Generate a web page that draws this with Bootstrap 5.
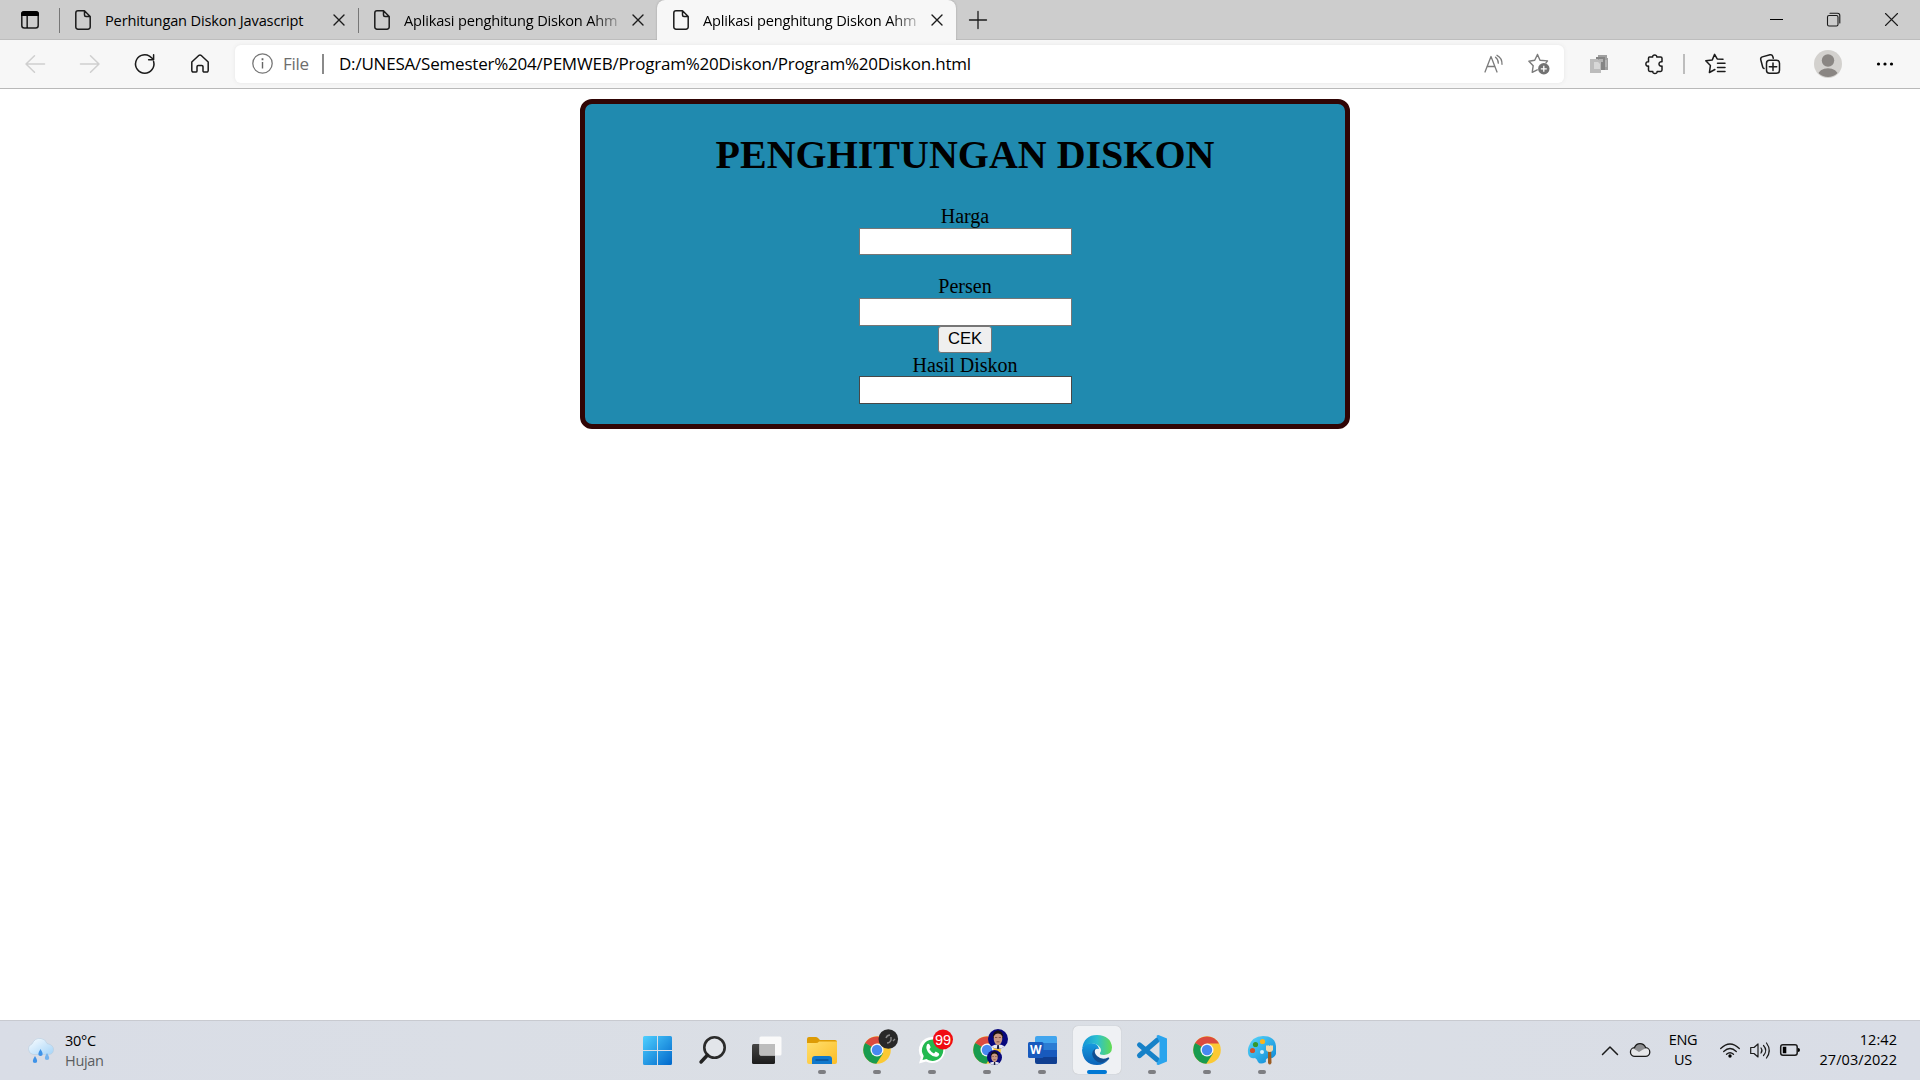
<!DOCTYPE html>
<html lang="id">
<head>
<meta charset="utf-8">
<title>Aplikasi penghitung Diskon</title>
<link href="https://cdn.jsdelivr.net/npm/bootstrap@5.3.0/dist/css/bootstrap.min.css" rel="stylesheet">
<style>
  body{width:1920px;height:1080px;overflow:hidden;background:#fff;color:#000;font-family:"Open Sans","Noto Sans",sans-serif}
  svg{display:block;flex:none;overflow:visible}
  .ln{fill:none;stroke:#1b1b1b;stroke-width:1.5;stroke-linecap:round;stroke-linejoin:round}
  .tabstrip{height:40px;background:#cdcdcd;box-shadow:inset 0 -1px 0 #bdbdbd}
  .tab-tools{width:59px;padding-left:21px}
  .tabitem{width:299px;height:40px;padding-left:16px;position:relative}
  .tabitem.sep::before{content:"";position:absolute;left:0;top:8px;width:1px;height:25px;background:#777}
  .tabitem.live{background:#f7f7f7;border-radius:8px 8px 0 0;box-shadow:0 0 2px #999;clip-path:inset(0 -3px 0 -3px)}
  .tabname{width:228px;margin-left:14px;padding-bottom:1px;font-size:14.6px;line-height:20px;letter-spacing:-.16px;white-space:nowrap}
  .tabname.fade-end{letter-spacing:-.2px;-webkit-mask-image:linear-gradient(90deg,#000 188px,transparent 222px);mask-image:linear-gradient(90deg,#000 188px,transparent 222px)}
  .winctl{width:57.5px}
  .toolbar{height:49px;background:#f7f7f7;border-bottom:1px solid #b9b9b9;padding:0 8px 1px 7.5px}
  .slot{width:55px;height:40px;display:flex;align-items:center;justify-content:center;flex:none}
  .addr{width:1329px;height:38px;margin:0 7.5px;background:#fff;border-radius:6px;box-shadow:0 0 4px #e6e6e6;padding-left:17px;font-size:17px}
  .vbar{width:2px;height:20px;background:#8a8a8a;flex:none}
  .filetag{color:#6d6d6d;width:39px;margin-left:10px;letter-spacing:-.3px}
  .urltext{margin-left:15px;letter-spacing:-.21px;white-space:nowrap}
  .viewport{height:931px;padding-top:10px;padding-left:580px;font-family:"Liberation Serif",serif}
  .calc{width:770px;height:330px;background:#208aaf;border:5px solid #300505;border-radius:12px;font-size:20px}
  .calc h1{font-size:40px;font-weight:700;line-height:46px;margin:28px 0 26px;color:#000;width:100%;text-align:center}
  .calc label{line-height:25px;height:24px}
  .calc input{width:213px;height:27px;border:1px solid #767676;border-radius:0;background:#fff;padding:1px 3px;display:block}
  .calc input.tall{height:28px}
  .calc input.result{border-color:#484848}
  .calc button{width:54px;height:27px;border:1px solid #767676;border-radius:3px;background:#efefef;font:16.67px/22px "Liberation Sans",sans-serif;padding:0 0 1px;color:#000}
  .taskbar{height:60px;background:linear-gradient(90deg,#d9dde6,#dbdfe5 50%,#d9dde6);border-top:1px solid #c8cad0}
  .side{flex:1 1 0}
  .apps{margin:0 2.5px 0 -2.5px}
  .app{width:55px;height:59px;position:relative;display:flex;align-items:center;justify-content:center}
  .app svg{position:relative;margin-bottom:1px}
  .app.run::after{content:"";position:absolute;left:23.5px;top:49px;width:8px;height:4px;border-radius:2px;background:#7d7e82}
  .app.live::before{content:"";position:absolute;left:3.5px;top:5px;width:48px;height:48px;border-radius:5px;background:#eff1f4;box-shadow:0 0 1px #aaa}
  .app.live::after{left:17.5px;width:20px;background:#0078d4}
  .tasktext{font-size:14.5px;line-height:20px;letter-spacing:-.3px}
  .tray{padding-bottom:1px}
</style>
<script src="https://cdn.jsdelivr.net/npm/bootstrap@5.3.0/dist/js/bootstrap.bundle.min.js"></script>
</head>
<body>
<svg width="0" height="0" class="position-absolute">
  <defs>
    <linearGradient id="gWin" x2="1" y2="1"><stop stop-color="#4fd0ff"/><stop offset="1" stop-color="#0067cb"/></linearGradient>
    <linearGradient id="gDark" y2="1" x2="0"><stop stop-color="#454545"/><stop offset="1" stop-color="#1c1c1c"/></linearGradient>
    <linearGradient id="gFold" x2="1" y2="1"><stop stop-color="#ffdf6e"/><stop offset="1" stop-color="#fcbd26"/></linearGradient>
    <linearGradient id="gCloud" x2="1" y2="1"><stop stop-color="#fbfdff"/><stop offset="1" stop-color="#a5d4f8"/></linearGradient>
    <linearGradient id="gEdge" x2="1" y2="0"><stop stop-color="#1493d8"/><stop offset=".5" stop-color="#2cc0cf"/><stop offset="1" stop-color="#63dc50"/></linearGradient>
    <linearGradient id="gEdge2" x2="0" y2="1"><stop stop-color="#169bdf"/><stop offset="1" stop-color="#0b62b8"/></linearGradient>
    <linearGradient id="gPaint" x2="1" y2="1"><stop stop-color="#5ad8fb"/><stop offset="1" stop-color="#0a86d5"/></linearGradient>
    <symbol id="page" viewBox="0 0 16 20"><path class="ln" d="M3 .8h6.5L15.2 6.500V17a2.200 2.200 0 0 1-2.200 2.200H3A2.200 2.200 0 0 1 .8 17V3A2.200 2.200 0 0 1 3 .8zM9.500 .8V5a1.500 1.500 0 0 0 1.500 1.500h4.200"/></symbol>
    <symbol id="cross" viewBox="0 0 12 12"><path class="ln" d="M1 1l10 10M11 1L1 11" style="stroke-width:1.4"/></symbol>
    <symbol id="chrome" viewBox="0 0 28 28">
      <circle cx="14" cy="14" r="13.800" fill="#fbc934"/>
      <path d="M14 14L2.050 7.100A13.800 13.800 0 0 0 13.300 27.800L20 17.500z" fill="#189b4f"/>
      <path d="M14 14L2.050 7.100A13.800 13.800 0 0 1 25.950 7.600H14L8 17.500z" fill="#db4a3f"/>
      <path d="M2.050 7.100L8.300 17.800L14 14z" fill="#189b4f"/>
      <circle cx="14" cy="14" r="6.500" fill="#f5f7fa"/><circle cx="14" cy="14" r="5.200" fill="#4688f1"/>
    </symbol>
    <symbol id="person" viewBox="0 0 20 20">
      <clipPath id="pc"><circle cx="10" cy="10" r="10"/></clipPath>
      <g clip-path="url(#pc)"><path fill="#08087c" d="M0 0h20v20H0z"/><path fill="#e6e8f3" d="M2 20Q3 15.500 10 15.500T18 20z"/><path fill="#181012" d="M5 9C4 -1 16 -1 15 9z"/><path fill="#c99881" d="M5.800 7.500Q7 4.500 10 4.500T14.200 7.500V11Q13 16 10 16T5.800 11z"/><path fill="#6b3c30" d="M7 8h2.300v.8H7zM10.700 8H13v.8h-2.300zM8.500 12.500h3v.7h-3z"/><path fill="#171c3d" d="M9.300 16h1.500l.5 4H8.800z"/></g>
    </symbol>
  </defs>
</svg>

<!-- tab strip -->
<div class="tabstrip d-flex align-items-center">
  <div class="tab-tools"><svg width="18" height="18" viewBox="0 0 18 18"><rect class="ln" x=".8" y="1" width="16.400" height="16" rx="2.500"/><path d="M0 5V3Q0 0 3 0h12q3 0 3 3v2zM5.500 5h1.300v12H5.500z"/></svg></div>
  <div class="tabitem sep d-flex align-items-center"><svg width="16" height="20"><use href="#page"/></svg><div class="tabname">Perhitungan Diskon Javascript</div><svg width="12" height="12"><use href="#cross"/></svg></div>
  <div class="tabitem sep d-flex align-items-center"><svg width="16" height="20"><use href="#page"/></svg><div class="tabname fade-end">Aplikasi penghitung Diskon Ahm</div><svg width="12" height="12"><use href="#cross"/></svg></div>
  <div class="tabitem live d-flex align-items-center"><svg width="16" height="20"><use href="#page"/></svg><div class="tabname fade-end">Aplikasi penghitung Diskon Ahm</div><svg width="12" height="12"><use href="#cross"/></svg></div>
  <svg width="18" height="18" style="margin:0 0 1px 13px"><path class="ln" d="M9 .5v17M.5 9h17" style="stroke-width:1.300"/></svg>
  <div class="d-flex ms-auto pb-1">
    <div class="winctl d-flex justify-content-center"><svg width="13" height="13"><path d="M0 7h13v1H0z"/></svg></div>
    <div class="winctl d-flex justify-content-center"><svg width="13" height="13"><rect class="ln" x=".5" y="3.500" width="10.500" height="10.500" rx="1.500" style="stroke-width:1.100"/><path class="ln" d="M3 1.300h7.500a2.300 2.300 0 0 1 2.300 2.300V11" style="stroke-width:1.100"/></svg></div>
    <div class="winctl d-flex justify-content-center"><svg width="13" height="13"><path class="ln" d="M.5 1.500l12 12M12.500 1.500l-12 12" style="stroke-width:1.100"/></svg></div>
  </div>
</div>

<!-- toolbar -->
<div class="toolbar d-flex align-items-center">
  <div class="slot"><svg width="20" height="18"><path class="ln" d="M9.500 .8L1 9l8.500 8.200M1 9h18.500" style="stroke:#cfcfcf"/></svg></div>
  <div class="slot"><svg width="20" height="18"><path class="ln" d="M10.500 .8L19 9l-8.500 8.200M19 9H.5" style="stroke:#cfcfcf"/></svg></div>
  <div class="slot"><svg width="20" height="20"><path class="ln" d="M18.600 7.500A9.200 9.200 0 1 1 14.500 2.100L18.300 5.300M18.600 .8v5h-5"/></svg></div>
  <div class="slot"><svg width="18" height="19"><path class="ln" d="M.8 8L8 1.300q1-.8 2 0L17.200 8v8.600a1.500 1.500 0 0 1-1.500 1.500h-2.500a1.200 1.200 0 0 1-1.200-1.200v-4.200a1.200 1.200 0 0 0-1.200-1.200H7.200A1.200 1.200 0 0 0 6 12.700v4.200a1.200 1.200 0 0 1-1.200 1.200H2.300A1.500 1.500 0 0 1 .8 16.600z"/></svg></div>
  <div class="addr d-flex align-items-center">
    <svg width="21" height="21"><circle class="ln" cx="10.500" cy="10.500" r="9.700" style="stroke:#767676;stroke-width:1.300"/><path d="M9.800 9h1.400v6.500H9.800zM9.600 5.300h1.800v1.900H9.600z" fill="#666"/></svg>
    <span class="filetag">File</span><div class="vbar"></div>
    <span class="urltext">D:/UNESA/Semester%204/PEMWEB/Program%20Diskon/Program%20Diskon.html</span>
    <svg class="ms-auto" width="20" height="18" style="margin-right:24px"><path class="ln" d="M1 17L7 1.500 13 17M3 11.500h8M11.500 2.200q3 2.300 2.800 6M13 .3q5.200 2.700 5 9" style="stroke:#7b7b7b;stroke-width:1.300"/></svg>
    <svg width="22" height="22" viewBox="0 0 22 22" style="margin-right:13.500px"><path class="ln" d="M9.500 1.500l2.500 5.700 7.500.7M9.500 1.500L6.700 7.300.9 8.200l4.300 4.500-1 6.600 5-2.500M19.500 7.900l-1.500 2" style="stroke:#7b7b7b;stroke-width:1.400"/><circle cx="15.800" cy="15.800" r="5.700" fill="#727272"/><path d="M15.800 12.800v6M12.800 15.800h6" stroke="#fff" stroke-width="1.300"/></svg>
  </div>
  <div class="slot"><svg width="18" height="18"><path fill="#a0a0a0" d="M8 0h9v3h1v12H8z"/><path fill="#858585" d="M6 2h9v13H6z"/><path fill="#b4b4b4" d="M9 4h4v3H9zM15 5h2v7h-2z"/><path fill="#bcbcbc" d="M0 4h8l3 3v11H0z"/><path fill="#d7d7d7" d="M4 7h4l2 2v5H4z"/></svg></div>
  <div class="slot"><svg width="17" height="20"><path class="ln" d="M4.500 3h3.200C7 .3 12.300.3 11.700 3h4q1.300 0 1.300 1.300v3.500c-4-.9-4 5.200 0 4.300v4q0 1.400-1.400 1.400h-3.500c.6 2.700-4.900 2.700-4.300 0H4.900q-1.400 0-1.400-1.400v-4c-3.500.7-3.500-5 0-4.300V4.300Q3.500 3 4.500 3z"/></svg></div>
  <div class="vbar" style="background:#bdbdbd;margin:0 2px"></div>
  <div class="slot"><svg width="20" height="20"><path class="ln" d="M18 5.800l-5.800-.4L9.600.8 7.300 6.400.8 7.300l4.600 4.800-1 6.900 5.500-3M12.500 9.700H20M12.500 13.900H20M12.500 18H20" transform="translate(0 -.5)"/></svg></div>
  <div class="slot"><svg width="20" height="20"><path class="ln" d="M4 14.500Q3 14.200 2.700 13L.7 5.500Q.4 3.500 2.300 2.900L10 .8q2-.5 2.700 1.400l.6 2"/><rect class="ln" x="6.500" y="6.300" width="13" height="13" rx="3"/><path class="ln" d="M13 9v7.500M9.300 12.800h7.400"/></svg></div>
  <div class="slot" style="width:61px"><svg width="28" height="28"><clipPath id="av"><circle cx="14" cy="14" r="13"/></clipPath><circle cx="14" cy="14" r="14" fill="#d3d1ce"/><circle cx="14" cy="10.500" r="6.200" fill="#8a8683"/><ellipse cx="14" cy="25.500" rx="10" ry="7.300" fill="#8a8683" clip-path="url(#av)"/></svg></div>
  <div class="slot" style="width:54px"><svg width="18" height="4"><circle cx="2.500" cy="2" r="1.600"/><circle cx="9" cy="2" r="1.600"/><circle cx="15.500" cy="2" r="1.600"/></svg></div>
</div>

<!-- page -->
<main class="viewport">
  <form class="calc d-flex flex-column align-items-center">
    <h1>PENGHITUNGAN DISKON</h1>
    <label for="harga">Harga</label><input id="harga">
    <label for="persen" style="margin-top:19px">Persen</label><input id="persen" class="tall">
    <button type="button">CEK</button>
    <label for="hasil" style="height:23px">Hasil Diskon</label><input id="hasil" class="tall result">
  </form>
</main>

<!-- taskbar -->
<footer class="taskbar d-flex align-items-center">
  <div class="side d-flex align-items-center tasktext" style="padding-left:27px">
    <svg width="27" height="26"><path d="M6 16.500A5.500 5.500 0 0 1 5 6Q8-.5 14 .5q4.500.500 6 5Q27 7 26.500 12q-.5 4.500-5 4.500z" fill="url(#gCloud)" stroke="#b9cddd" stroke-width=".6"/><path fill="#3f93e8" d="M8 18q4.500 7 0 7t0-7zM13.500 11q4.500 7 0 7t0-7z"/><path fill="#74b3ee" d="M20 15q4.500 7 0 7t0-7z"/></svg>
    <div style="margin-left:11px"><div>30°C</div><div style="color:#5b5d61">Hujan</div></div>
  </div>
  <div class="apps d-flex">
    <div class="app"><svg width="29" height="29"><path fill="url(#gWin)" d="M1.500 0H14v14H0V1.500Q0 0 1.500 0zM15 0h12.500Q29 0 29 1.500V14H15zM0 15h14v14H1.500Q0 29 0 27.500zM15 15h14v12.500q0 1.500-1.500 1.500H15z"/></svg></div>
    <div class="app"><svg width="27" height="28"><circle cx="15.500" cy="11.500" r="10.200" fill="#e2e5ea" stroke="#2b2b2b" stroke-width="2.600"/><path d="M8.500 19L2 26" stroke="#222" stroke-width="3.400" stroke-linecap="round"/></svg></div>
    <div class="app"><svg width="30" height="28"><rect y="8" width="23" height="20" rx="1.500" fill="url(#gDark)"/><rect x="7.500" y=".5" width="22" height="19" rx="1.500" fill="#fafafa"/><path fill="#bdbdbd" d="M7.500 8H23v11.500H9q-1.500 0-1.500-1.500z"/></svg></div>
    <div class="app run"><svg width="30" height="27"><path fill="#dd9b05" d="M0 2Q0 0 2 0h7q1.500 0 2.500 1.500L13 3h15q2 0 2 2v5H0z"/><path fill="url(#gFold)" d="M0 6h9q2 0 3-1.500h18V25q0 2-2 2H2q-2 0-2-2z"/><path fill="#1078cc" d="M5 27v-5q0-3 3-3h14q3 0 3 3v5z"/><path stroke="#073f7d" d="M8.500 23h13"/></svg></div>
    <div class="app run"><svg width="28" height="28"><use href="#chrome"/><circle cx="25.300" cy="3" r="9.800" fill="#282828"/><path d="M23 2q1-3 4-3M28 1v3q-1 3-4 3M30 5l2-2" stroke="#858585" stroke-width="1.400" fill="none"/></svg></div>
    <div class="app run"><svg width="26" height="27"><path d="M13.500 0A13 13 0 1 1 7 24.500L0 26.500 2 20A13 13 0 0 1 13.500 0z" fill="#fff"/><path d="M13.500 2.500A10.700 10.700 0 1 1 7.500 22L3.500 23l1.200-4A10.700 10.700 0 0 1 13.500 2.500z" fill="#23b94f"/><path d="M8 7.500q1.500-1.800 2.700.5l1 2.300-1.300 1.900q1.800 3 4.600 4.200l1.700-1.800 3 1.600q1.300 1-.4 2.700-3.500 2.500-8.500-2T8 7.500z" fill="#fff"/><circle cx="24" cy="2.500" r="10" fill="#f00c12"/><text x="24" y="7.500" text-anchor="middle" fill="#fff" font-size="14.500" font-family="Liberation Sans, sans-serif">99</text></svg></div>
    <div class="app run"><svg width="28" height="28"><use href="#chrome"/><use href="#person" x="15" y="-7" width="20" height="20"/><use href="#person" x="14" y="14" width="15" height="15"/></svg></div>
    <div class="app run"><svg width="29" height="28"><path fill="#41a5ee" d="M9 0h18.500Q29 0 29 1.500V7H7V2q0-2 2-2z"/><path fill="#2b7cd3" d="M7 7h22v7H7z"/><path fill="#185abd" d="M7 14h22v7H7z"/><path fill="#103f91" d="M7 21h22v5.500q0 1.500-1.500 1.500H9q-2 0-2-2z"/><rect y="6" width="15.500" height="16" rx="1.500" fill="#185abd"/><text x="7.700" y="18.300" text-anchor="middle" fill="#fff" font-weight="700" font-size="12" font-family="Open Sans, sans-serif">W</text></svg></div>
    <div class="app run live"><svg width="30" height="30"><path fill="url(#gEdge2)" d="M0 15Q1 8 9 8q7 0 8 6-4-1-5 3 0 6 6 9 5 2 9-2-5 6-12 6Q1 29.500 0 15z"/><path fill="#114e91" d="M14 13q-7 5-1 12 6 6 14-1 1-2-1-1.500-6 3-11-1.500-4-4-1-8z"/><path fill="url(#gEdge)" d="M.2 13.500Q2 0 15 0q14 .5 15 12.500 0 7-8 7.500-5-.200-4-2 2-3 0-5.500Q15 8 9 8.500 3 9 .2 13.500z"/></svg></div>
    <div class="app run"><svg width="30" height="30"><path d="M2.500 9.800L20.500 25M2.500 20.500L20.500 5" stroke="#1681c8" stroke-width="5" stroke-linecap="round"/><path fill="#2aa4ed" d="M21.500 0L30 3.500v23L21.500 30q-1.500 0-2-1l3-6V7l-3-6q.5-1 2-1z"/></svg></div>
    <div class="app run"><svg width="28" height="28"><use href="#chrome"/></svg></div>
    <div class="app run"><svg width="28" height="28"><path d="M15 0q12 0 13 10v8q-2 5-7 4-4 0-3 4-6 3-8 0-1-3-3-4-4 1-6-2Q-1 16 .5 11 4 0 15 0z" fill="url(#gPaint)"/><circle cx="14.500" cy="5.500" r="2.600" fill="#f8b51c"/><circle cx="7.500" cy="8.500" r="2.600" fill="#35982d"/><circle cx="4.500" cy="14.500" r="2.600" fill="#d14f2b"/><circle cx="14" cy="16" r="2" fill="#d4edfa"/><path fill="#9b5c22" d="M20 15h3.200l.3 12q-1.800 3-3.500 0z"/><path fill="#f2d7a8" d="M18 9l1 1 1-1 1.500 1L23 9l1 1 1-1v5q-1 2-3.500 2T18 14z"/></svg></div>
  </div>
  <div class="side tray d-flex align-items-center justify-content-end tasktext" style="padding-right:23px">
    <svg width="16" height="9"><path class="ln" d="M.5 8.500L8 1l7.500 7.500"/></svg>
    <svg width="20" height="14" style="margin-left:12px"><path d="M5 13.300A4.300 4.300 0 0 1 4.500 4.700Q6 .7 10 .7t5.700 4A4.300 4.300 0 0 1 15.300 13.300z" fill="#e6e7e9"/><path fill="#8c8d90" d="M3 5.200Q6 .7 10 .7t6 4.500L13 6.500 9 9 3 5.200z"/><path class="ln" d="M5 13.300A4.300 4.300 0 0 1 4.500 4.700Q6 .7 10 .7t5.700 4A4.300 4.300 0 0 1 15.300 13.300z" style="stroke-width:1.300"/></svg>
    <div class="text-center" style="width:30px;margin-left:18px">ENG<br>US</div>
    <svg width="20" height="15" style="margin-left:22px"><path class="ln" d="M.7 5.500q9.300-9 18.600 0M3.700 8.500q6.300-6 12.600 0M6.500 11.300q3.500-3.200 7 0" style="stroke-width:1.300"/><circle cx="10" cy="13" r="1.700"/></svg>
    <svg width="20" height="17" style="margin-left:10px"><path class="ln" d="M.7 5.500H4L8 2v13l-4-3.500H.7zM11 6q2 2.500 0 5M13.500 3.500q4.500 5 0 10M16.500 1q5.500 7.500 0 15" style="stroke-width:1.200"/></svg>
    <svg width="20" height="12" style="margin-left:10px"><rect class="ln" x=".7" y=".7" width="16.500" height="10.600" rx="2.200"/><path d="M2.800 2.800h3.500v6.400H2.800zM18 4q2 0 2 2t-2 2z"/></svg>
    <div class="text-end" style="width:97px;letter-spacing:.05px">12:42<br>27/03/2022</div>
  </div>
</footer>
</body>
</html>
